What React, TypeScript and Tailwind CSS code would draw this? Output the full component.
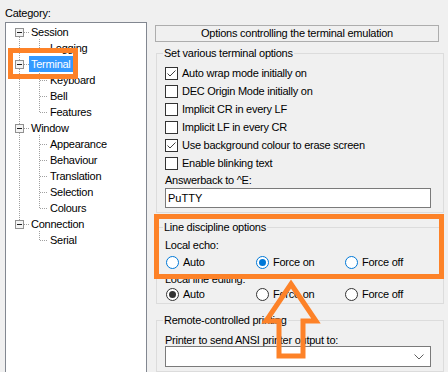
import React from "react";

type Node = { label: string; level: 0 | 1; selected?: boolean };

const tree: Node[] = [
  { label: "Session", level: 0 },
  { label: "Logging", level: 1 },
  { label: "Terminal", level: 0, selected: true },
  { label: "Keyboard", level: 1 },
  { label: "Bell", level: 1 },
  { label: "Features", level: 1 },
  { label: "Window", level: 0 },
  { label: "Appearance", level: 1 },
  { label: "Behaviour", level: 1 },
  { label: "Translation", level: 1 },
  { label: "Selection", level: 1 },
  { label: "Colours", level: 1 },
  { label: "Connection", level: 0 },
  { label: "Serial", level: 1 },
];

const options = [
  { label: "Auto wrap mode initially on", checked: true },
  { label: "DEC Origin Mode initially on", checked: false },
  { label: "Implicit CR in every LF", checked: false },
  { label: "Implicit LF in every CR", checked: false },
  { label: "Use background colour to erase screen", checked: true },
  { label: "Enable blinking text", checked: false },
];

// tree connector lines + expander boxes, coords relative to the tree box inner edge
const TreeLines = () => {
  const cy = (i: number) => 9 + 16 * i + 0.5;
  const roots = tree.map((n, i) => (n.level === 0 ? i : -1)).filter((i) => i >= 0);
  const groups: { parent: number; last: number }[] = [];
  roots.forEach((r, k) => {
    const end = k + 1 < roots.length ? roots[k + 1] - 1 : tree.length - 1;
    if (end > r) groups.push({ parent: r, last: end });
  });
  const dot = { stroke: "#a0a0a0", strokeWidth: 1, strokeDasharray: "1 1" };
  return (
    <svg className="absolute left-0 top-0" width="140" height="260" shapeRendering="crispEdges">
      <line x1="13.5" y1="14" x2="13.5" y2={cy(12) - 4} {...dot} />
      {roots.map((r) => (
        <line key={"h" + r} x1="18" y1={cy(r)} x2="24" y2={cy(r)} {...dot} />
      ))}
      {groups.map((g) => (
        <g key={"g" + g.parent}>
          <line x1="33.5" y1={cy(g.parent) + 6} x2="33.5" y2={cy(g.last)} {...dot} />
          {tree.slice(g.parent + 1, g.last + 1).map((_, j) => (
            <line key={j} x1="34" y1={cy(g.parent + 1 + j)} x2="42" y2={cy(g.parent + 1 + j)} {...dot} />
          ))}
        </g>
      ))}
      {roots.map((r) => (
        <g key={"b" + r}>
          <rect x="9.5" y={cy(r) - 4.5} width="8" height="8" fill="#f4f4f4" stroke="#919191" />
          <line x1="11" y1={cy(r)} x2="16" y2={cy(r)} stroke="#1e1e1e" />
        </g>
      ))}
    </svg>
  );
};

const Checkbox = ({ checked }: { checked: boolean }) => (
  <span className="w-[13px] h-[13px] border border-[#333333] bg-white shrink-0 flex items-center justify-center">
    {checked && (
      <svg width="11" height="11" viewBox="0 0 11 11">
        <polyline points="1.5,5.5 4,8 9.5,2.5" fill="none" stroke="#404040" strokeWidth="1" />
      </svg>
    )}
  </span>
);

const Radio = ({ on, blue }: { on?: boolean; blue?: boolean }) => (
  <span
    className={`w-[13px] h-[13px] rounded-full border bg-white shrink-0 flex items-center justify-center ${
      blue ? "border-[#0078d7]" : "border-[#333333]"
    }`}
  >
    {on && <span className={`w-[7px] h-[7px] rounded-full ${blue ? "bg-[#0078d7]" : "bg-[#333333]"}`} />}
  </span>
);

const RadioRow = ({ selected, blue }: { selected: number; blue?: boolean }) => (
  <div className="grid grid-cols-[90px_89px_90px] h-[16px] items-center">
    {["Auto", "Force on", "Force off"].map((t, i) => (
      <div key={t} className="flex items-center gap-[4px] pl-[1px]">
        <Radio on={selected === i} blue={blue} />
        <span>{t}</span>
      </div>
    ))}
  </div>
);

const GroupLabel = ({ text }: { text: string }) => (
  <div className="h-[14px] leading-[14px] -mt-[8px] flex">
    <span className="-ml-[2px] px-[1px] bg-[#f0f0f0]">{text}</span>
  </div>
);

export default function App() {
  return (
    <div className="relative w-[448px] h-[372px] overflow-hidden bg-[#f0f0f0] flex text-black text-[11px] tracking-[-0.25px] font-['Liberation_Sans',Arial,sans-serif]">
      {/* Category tree */}
      <div className="w-[155px] shrink-0 pl-[5px]">
        <div className="h-[22px] pt-[6px] leading-[14px]">Category:</div>
        <div className="relative w-[142px] h-[360px] border border-[#828790] bg-white pt-[1px]">
          <TreeLines />
          {tree.map((n) => (
            <div key={n.label} className={`h-[16px] flex ${n.level === 0 ? "pl-[23px]" : "pl-[42px]"}`}>
              <span
                className={`px-[2px] leading-[16px] ${n.selected ? "bg-[#3399ff] text-white" : ""}`}
              >
                {n.label}
              </span>
            </div>
          ))}
        </div>
      </div>

      {/* Options panel */}
      <div className="flex flex-col pt-[25px]">
        <div className="w-[284px] h-[17px] border border-[#adadad] flex items-center justify-center">
          Options controlling the terminal emulation
        </div>

        <div className="mt-[11px] ml-[1px] w-[288px] border border-[#dcdcdc] pl-[8px] pb-[4px]">
          <GroupLabel text="Set various terminal options" />
          <div className="mt-[4px]">
            {options.map((o) => (
              <div key={o.label} className="h-[18px] flex items-center gap-[4px]">
                <Checkbox checked={o.checked} />
                <span>{o.label}</span>
              </div>
            ))}
          </div>
          <div className="mt-[1px] h-[14px] leading-[14px]">Answerback to ^E:</div>
          <div className="mt-[1px] w-[266px] h-[20px] border border-[#7a7a7a] bg-white flex items-center pl-[2px] tracking-normal">
            PuTTY
          </div>
        </div>

        <div className="mt-[14px] ml-[1px] w-[288px] border border-[#dcdcdc] pl-[8px] pb-[1px]">
          <GroupLabel text="Line discipline options" />
          <div className="mt-[4px] h-[14px] leading-[14px]">Local echo:</div>
          <div className="mt-[2px]">
            <RadioRow selected={1} blue />
          </div>
          <div className="mt-[2px] h-[14px] leading-[14px]">Local line editing:</div>
          <RadioRow selected={0} />
        </div>

        <div className="mt-[16px] ml-[1px] w-[288px] h-[80px] border border-[#dcdcdc] pl-[8px]">
          <GroupLabel text="Remote-controlled printing" />
          <div className="mt-[7px] h-[12px] leading-[12px]">Printer to send ANSI printer output to:</div>
          <div className="w-[266px] h-[21px] border border-[#7a7a7a] bg-white flex items-center justify-end pr-[6px]">
            <svg width="10" height="6" viewBox="0 0 10 6">
              <polyline points="0.5,0.5 5,5 9.5,0.5" fill="none" stroke="#606060" strokeWidth="1" />
            </svg>
          </div>
        </div>
      </div>

      {/* orange annotations */}
      <div className="absolute left-[8px] top-[48px] w-[70px] h-[31px] border-[5px] border-[#fd8228]" />
      <div className="absolute left-[154px] top-[214px] w-[290px] h-[65px] border-[5px] border-[#fd8228]" />
      <svg className="absolute left-0 top-0 pointer-events-none" width="448" height="372">
        <polygon
          points="291,284 316,321 303,321 303,356 279,356 279,321 266,321"
          fill="none"
          stroke="#fd8228"
          strokeWidth="5"
          strokeLinejoin="miter"
        />
      </svg>
    </div>
  );
}
